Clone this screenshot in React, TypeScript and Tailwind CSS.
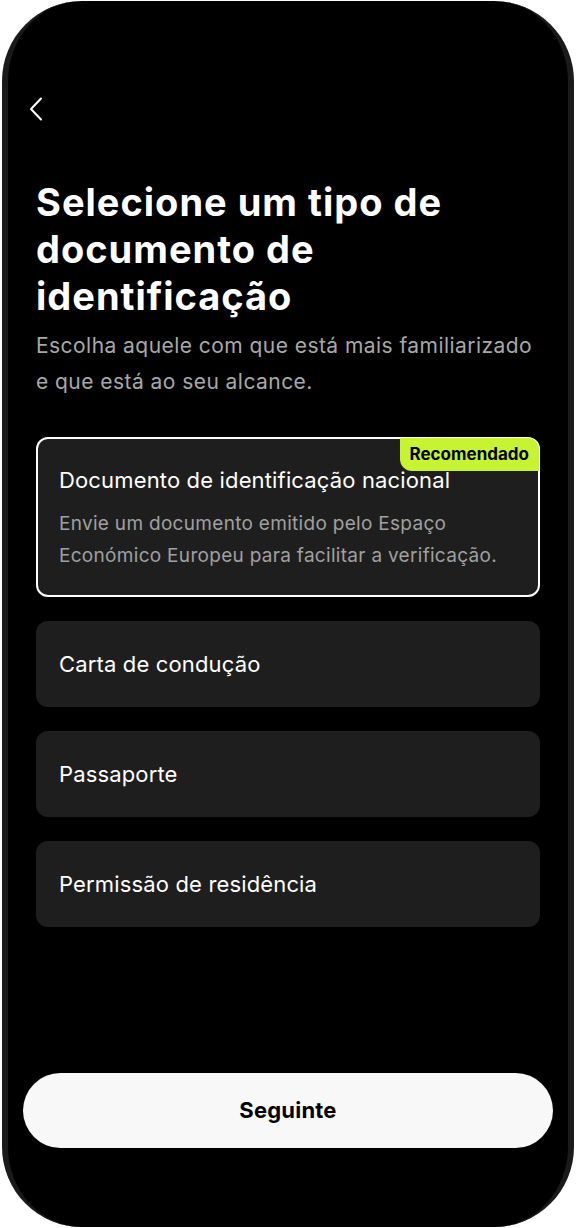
import React from "react";

const font = { fontFamily: "Inter, 'Noto Sans', sans-serif" };

function Option({ label }: { label: string }) {
  return (
    <div className="h-[86px] rounded-[12px] bg-[#1e1e1e] flex items-center px-[23px]">
      <span className="text-[22px] leading-[28px] tracking-[0.15px] text-white">{label}</span>
    </div>
  );
}

export default function App() {
  return (
    <div className="w-[576px] h-[1228px] bg-white pt-[1px]" style={font}>
      <div className="mx-[2px] h-[1226px] rounded-[80px] bg-black border-x-[6px] border-x-[#1a1a1a] border-y-0 flex flex-col overflow-hidden">
        <div className="pt-[96px] pl-[21px]">
          <svg width="14" height="24" viewBox="0 0 14 24" fill="none">
            <path d="M12 1.5 L2 12 L12 22.5" stroke="white" strokeWidth="2" strokeLinecap="round" strokeLinejoin="round" />
          </svg>
        </div>
        <div className="px-[28px] mt-[58px]">
          <h1 className="text-[38px] leading-[47px] font-bold text-white tracking-[1px]">
            Selecione um tipo de documento de identificação
          </h1>
          <p className="mt-[8px] text-[21px] leading-[36px] tracking-[0.45px] text-[#a8a8a8]">
            Escolha aquele com que está mais familiarizado e que está ao seu alcance.
          </p>
        </div>
        <div className="px-[28px] mt-[37px] flex flex-col gap-[24px]">
          <div className="relative rounded-[12px] bg-[#1e1e1e] border-2 border-white pt-[27px] pb-[23px] px-[21px]">
            <div className="absolute -top-[1px] -right-[1px] h-[33px] px-[10px] bg-[#c6f432] rounded-tr-[11px] rounded-bl-[12px] flex items-center">
              <span className="text-[17px] font-bold text-black">Recomendado</span>
            </div>
            <div className="text-[22px] leading-[28px] tracking-[0.15px] text-white">Documento de identificação nacional</div>
            <div className="mt-[14px] text-[19px] leading-[32px] tracking-[0.3px] text-[#a0a0a0]">
              Envie um documento emitido pelo Espaço Económico Europeu para facilitar a verificação.
            </div>
          </div>
          <Option label="Carta de condução" />
          <Option label="Passaporte" />
          <Option label="Permissão de residência" />
        </div>
        <div className="flex-1" />
        <div className="px-[15px] pb-[79px]">
          <button className="w-full h-[75px] rounded-full bg-[#f8f8f8] text-[22px] tracking-[0.2px] font-bold text-black">
            Seguinte
          </button>
        </div>
      </div>
    </div>
  );
}
